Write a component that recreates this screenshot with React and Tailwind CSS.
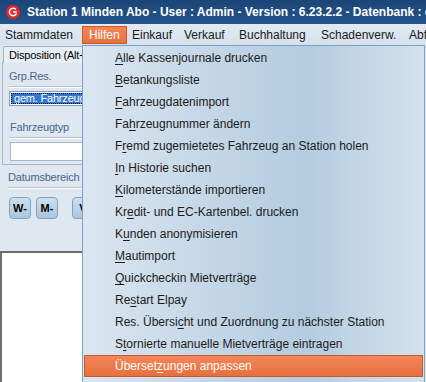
import React from 'react';

const menuItems = [
    {text: "Stammdaten", w: "w-[82px]"},
    {text: "Hilfen", w: "w-[45px]", active: true},
    {text: "Einkauf", w: "w-[52px]"},
    {text: "Verkauf", w: "w-[55px]"},
    {text: "Buchhaltung", w: "w-[82px]"},
    {text: "Schadenverw.", w: "w-[88px]"},
    {text: "Abfragen", w: "w-[60px]"},
];

// [before, mnemonic, after]
const entries = [
    ["", "A", "lle Kassenjournale drucken"],
    ["", "B", "etankungsliste"],
    ["", "F", "ahrzeugdatenimport"],
    ["Fa", "h", "rzeugnummer ändern"],
    ["F", "r", "emd zugemietetes Fahrzeug an Station holen"],
    ["", "I", "n Historie suchen"],
    ["", "K", "ilometerstände importieren"],
    ["Kr", "e", "dit- und EC-Kartenbel. drucken"],
    ["K", "u", "nden anonymisieren"],
    ["", "M", "autimport"],
    ["", "Q", "uickcheckin Mietverträge"],
    ["Re", "s", "tart Elpay"],
    ["Res. Übersi", "c", "ht und Zuordnung zu nächster Station"],
    ["S", "t", "ornierte manuelle Mietverträge eintragen"],
    ["Überset", "z", "ungen anpassen"],
];

const AppIcon = () => (
    <svg width="14" height="14" viewBox="0 0 14 14" className="shrink-0">
        <circle cx="7" cy="7" r="7" fill="#e3262b"/>
        <path d="M9.8 4.4 A3.7 3.7 0 1 0 10.5 8.4" fill="none" stroke="#fff" strokeWidth="1.5"/>
        <path d="M7 7 H10.8" stroke="#fff" strokeWidth="1.5"/>
    </svg>
);

const Separator = () => (
    <div className="mt-[3px] border-t border-[#b6c6d6] border-b border-b-white"/>
);

const SmallButton = ({children, className}) => (
    <div className={"h-[22px] w-[22px] rounded-[4px] border border-[#7fa2c2] bg-gradient-to-b from-[#cfe0ee] to-[#a9c6de] flex items-center justify-center text-[11px] font-bold text-black " + className}>
        {children}
    </div>
);

const App = () => {
    return (
        <div className="relative w-[426px] h-[382px] overflow-hidden bg-[#dfe8f1] font-['Liberation_Sans',Arial,sans-serif] text-[12px] text-black">
            {/* title bar */}
            <div className="h-[24px] bg-gradient-to-b from-[#1b4577] to-[#24558a] flex items-center pl-[6px] gap-[7px]">
                <AppIcon/>
                <div className="whitespace-nowrap text-white font-bold text-[12px]">
                    Station 1 Minden Abo - User : Admin - Version : 6.23.2.2 - Datenbank : cx
                </div>
            </div>

            {/* menu bar */}
            <div className="h-[21px] bg-gradient-to-b from-[#e2eaf3] to-[#d5e1ed] flex items-stretch whitespace-nowrap pt-[2px] pb-[1px]">
                {menuItems.map((item, i) => (
                    <div key={i}
                         className={item.active
                             ? item.w + " shrink-0 flex items-center pl-[6px] border border-[#c95a2a] bg-gradient-to-b from-[#f4875a] to-[#e8703e] text-white"
                             : item.w + " shrink-0 flex items-center pl-[5px] text-[#1a1a1a]"}>
                        {item.text}
                    </div>
                ))}
            </div>

            {/* left panel */}
            <div className="w-[200px] text-[11px] tracking-[-0.2px]">
                <div className="h-[17px] pl-[3px] pt-[1px] flex">
                    <div className="border border-b-0 border-[#9fb1c3] bg-[#e7eef5] px-[5px] h-[17px] flex items-center whitespace-nowrap rounded-t-[2px]">
                        Disposition (Alt+1)
                    </div>
                </div>
                <div className="ml-[2px] border-l border-b border-[#a7b8c9] h-[103px] pl-[6px] pr-0 pt-[7px]">
                    <div className="text-[#44668c] leading-[14px]">Grp.Res.</div>
                    <Separator/>
                    <div className="mt-[3px] h-[15px] border border-[#7d9dbf] bg-white p-[1px]">
                        <div className="h-full bg-[#2f78d6] text-white leading-[11px] pl-[3px] outline outline-1 outline-dotted outline-black -outline-offset-1 whitespace-nowrap">
                            gem. Fahrzeuggruppe
                        </div>
                    </div>
                    <div className="mt-[14px] pl-[1px] text-[#44668c] leading-[14px]">Fahrzeugtyp</div>
                    <Separator/>
                    <div className="mt-[3px] ml-[1px] h-[19px] border border-[#a5b8cc] bg-white"/>
                </div>
                <div className="pl-[8px] pt-[5px]">
                    <div className="text-[#44668c] leading-[14px]">Datumsbereich</div>
                    <Separator/>
                    <div className="flex mt-[8px] pl-[1px] tracking-normal">
                        <SmallButton>W-</SmallButton>
                        <SmallButton className="ml-[5px]">M-</SmallButton>
                        <SmallButton className="ml-[14px]">V</SmallButton>
                    </div>
                </div>
                <div className="mt-[32px] h-[140px] border-t-2 border-l-2 border-[#6e6e6e] bg-white"/>
            </div>

            {/* dropdown menu */}
            <div className="absolute left-[82px] top-[45px] w-[343px] h-[345px] border border-[#7b9fc6] bg-gradient-to-r from-[#dae6f0] via-[#b4cce0] via-65% to-[#d3e2ec] pt-[1px] px-[1px]">
                {entries.map((e, i) => {
                    const last = i === entries.length - 1;
                    return (
                        <div key={i}
                             className={last
                                 ? "h-[22px] flex items-center pl-[30px] border border-[#c65a2c] bg-gradient-to-b from-[#f3865a] to-[#e76f3d] text-white whitespace-nowrap"
                                 : "h-[22px] flex items-center pl-[31px] text-[#1b1b1b] whitespace-nowrap"}>
                            <span>{e[0]}<span className="underline underline-offset-[2px]">{e[1]}</span>{e[2]}</span>
                        </div>
                    );
                })}
            </div>
        </div>
    );
}

export default App;
